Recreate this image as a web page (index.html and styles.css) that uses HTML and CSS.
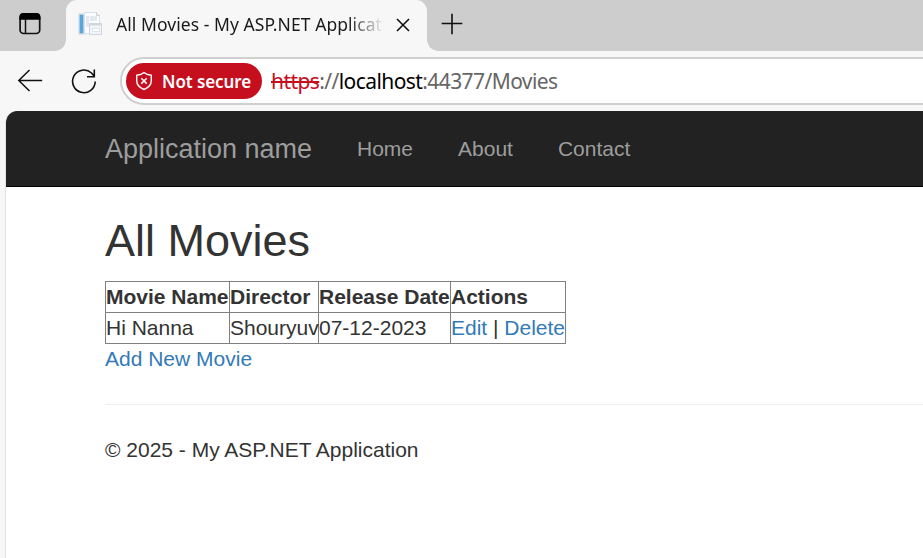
FILE: index.html
```html
<!DOCTYPE html>
<html lang="en">
<head>
<meta charset="utf-8">
<title>All Movies - My ASP.NET Application</title>
<link rel="stylesheet" href="styles.css">
</head>
<body>
<header class="tabs">
  <div class="workspace">
    <svg width="24" height="24" viewBox="0 0 24 24"><rect x="2.1" y="2.1" width="19.6" height="19.4" rx="3.6" fill="none" stroke="#111" stroke-width="1.7"/><path d="M1.4 7.8V5a4 4 0 0 1 4-4h13a4 4 0 0 1 4 4v2.8z" fill="#000"/><path d="M7.500 7v14.500" stroke="#111" stroke-width="1.5"/></svg>
  </div>
  <div class="tab">
    <svg class="favicon" width="26" height="26" viewBox="0 0 26 26"><path d="M1.500 2.500h7v21h-7z" fill="#f4f6f8" stroke="#dfe4e8"/><path d="M2.500 3.500h4v19h-4z" fill="#5ba5d9"/><path d="M7.500 1.500h12l3 3v18h-15z" fill="#fafcfd" stroke="#dbe1e6"/><path d="M19.500 1.500v3h3" fill="none" stroke="#c9d2da"/><path d="M9 5h3v11H9zM13 5h7v5h-7z" fill="#e3e9ee"/><path d="M12.500 12.500h12v11h-12z" fill="#f1f5f9" stroke="#cfd5dd"/><path d="M12 12h13v2.500H12z" fill="#cfd7df"/><path d="M15.500 17.500h7v3h-7z" fill="#fff" stroke="#dde4ea"/></svg>
    <span class="title">All Movies - My ASP.NET Applicati</span>
    <svg class="close" width="14" height="14" viewBox="0 0 14 14"><path d="M1 1l12 12M13 1L1 13" stroke="#111" stroke-width="1.6"/></svg>
  </div>
  <svg class="plus" width="22" height="22" viewBox="0 0 22 22"><path d="M11 .7v20.600M.7 10.500h20.600" stroke="#111" stroke-width="1.6"/></svg>
</header>
<div class="toolbar">
  <svg class="back" width="26" height="24" viewBox="0 0 26 24"><path d="M12.500 2L1.800 12.500 12.500 23M1.800 12.500h23.400" fill="none" stroke="#111" stroke-width="1.5"/></svg>
  <svg class="reload" width="26" height="26" viewBox="0 0 26 26"><path d="M24.200 13.500A11.300 11.300 0 1 1 20.500 5L23.500 8.500M23.300 1.500v7.200h-7.300" fill="none" stroke="#111" stroke-width="1.6"/></svg>
  <div class="address">
    <div class="badge">
      <svg width="18" height="20" viewBox="0 0 18 20"><path d="M9 1.500C7 3.300 4.300 4 1.700 4.200v5.300c0 4.300 2.700 7.300 7.300 9 4.600-1.700 7.300-4.700 7.300-9V4.200C13.700 4 11 3.300 9 1.500z" fill="none" stroke="#fff" stroke-width="1.4" stroke-linejoin="round"/><path d="M6.300 7.200l5.400 5.400M11.700 7.200l-5.400 5.400" stroke="#fff" stroke-width="1.5"/></svg>
      <span class="badge-text">Not secure</span>
    </div>
    <div class="url"><span class="scheme">https</span><span class="sep">://</span><span class="host">localhost</span><span class="path">:44377/Movies</span></div>
  </div>
</div>
<div class="page">
  <nav class="navbar">
    <a class="brand">Application name</a><a>Home</a><a>About</a><a>Contact</a>
  </nav>
  <main class="content">
    <h2>All Movies</h2>
    <table>
      <colgroup><col class="c-name"><col class="c-director"><col class="c-date"><col class="c-actions"></colgroup>
      <tr><th>Movie Name</th><th>Director</th><th>Release Date</th><th>Actions</th></tr>
      <tr><td>Hi Nanna</td><td>Shouryuv</td><td>07-12-2023</td><td><a>Edit</a> | <a>Delete</a></td></tr>
    </table>
    <a>Add New Movie</a>
    <hr>
    <footer>© 2025 - My ASP.NET Application</footer>
  </main>
</div>
</body>
</html>
```
FILE: styles.css
```css
* { box-sizing: border-box; }
body {
  margin: 0;
  height: 558px;
  overflow: hidden;
  background: #f7f7f7;
  font-family: "Liberation Sans", Arial, sans-serif;
}
svg { display: block; flex: none; }
.tabs {
  display: flex;
  height: 51px;
  background: #cdcdcd;
  font-family: "Noto Sans", "Open Sans", sans-serif;
}
.workspace { width: 66px; padding: 12px 0 0 18px; }
.tab {
  position: relative;
  display: flex;
  align-items: center;
  width: 361px;
  height: 51px;
  padding: 0 0 3px 11px;
  border-radius: 11px 11px 0 0;
  background: #f7f7f7;
}
.tab::before, .tab::after {
  content: "";
  position: absolute;
  bottom: 0;
  width: 11px;
  height: 11px;
}
.tab::before { left: -11px; background: radial-gradient(circle at 0 0, transparent 10.500px, #f7f7f7 11px); }
.tab::after { right: -11px; background: radial-gradient(circle at 100% 0, transparent 10.500px, #f7f7f7 11px); }
.title {
  width: 268px;
  margin-left: 13px;
  white-space: nowrap;
  font-size: 17.500px;
  line-height: 26px;
  letter-spacing: 0.060px;
  color: #1a1a1a;
  -webkit-mask-image: linear-gradient(to right, #000 232px, transparent 268px);
  mask-image: linear-gradient(to right, #000 232px, transparent 268px);
}
.close { margin: 2px 0 0 12px; }
.plus { margin: 13px 0 0 14px; }
.toolbar { display: flex; height: 60px; }
.back { margin: 17px 0 0 17px; }
.reload { margin: 17px 0 0 28px; }
.address {
  display: flex;
  align-items: center;
  flex: 1;
  height: 48px;
  margin: 6px -30px 0 23px;
  padding-left: 4px;
  border: 2px solid #d0d0d0;
  border-radius: 24px;
  background: #fff;
  font-family: "Noto Sans", "Open Sans", sans-serif;
}
.badge {
  display: flex;
  align-items: center;
  width: 136px;
  height: 36px;
  padding-left: 9px;
  border-radius: 18px;
  background: #c50f1f;
  color: #fff;
}
.badge-text { margin-left: 9px; font-size: 17px; font-weight: 600; letter-spacing: -0.100px; white-space: nowrap; }
.url { display: flex; margin-left: 9px; font-size: 21px; line-height: 30px; letter-spacing: -0.580px; color: #666; white-space: nowrap; }
.scheme { color: #c50f1f; text-decoration: line-through; text-decoration-thickness: 2px; }
.host { color: #000; }
.page {
  height: 447px;
  margin-left: 5px;
  border-left: 1px solid #e2e2e2;
  border-top-left-radius: 12px;
  background: #fff;
  overflow: hidden;
}
.navbar {
  display: flex;
  height: 76px;
  padding-left: 99px;
  border-bottom: 1px solid #000;
  background: #222;
  color: #9d9d9d;
  font-size: 21px;
  line-height: 76px;
  white-space: nowrap;
}
.navbar a { margin-right: 45px; }
.navbar .brand { width: 207px; font-size: 27px; }
.content { padding-left: 99px; color: #333; font-size: 21px; line-height: 30px; }
h2 { margin: 29px 0 15px; font-size: 45px; line-height: 50px; font-weight: 500; }
table { width: 461px; table-layout: fixed; border-collapse: collapse; border: 1px solid gray; }
th, td { height: 31px; padding: 0; border: 1px solid gray; text-align: left; white-space: nowrap; }
.c-name { width: 124px; }
.c-director { width: 89px; }
.c-date { width: 132px; }
.c-actions { width: 115px; }
.content a { color: #337ab7; }
hr { margin: 30px 0; border: 0; border-top: 1px solid #eee; }
```
